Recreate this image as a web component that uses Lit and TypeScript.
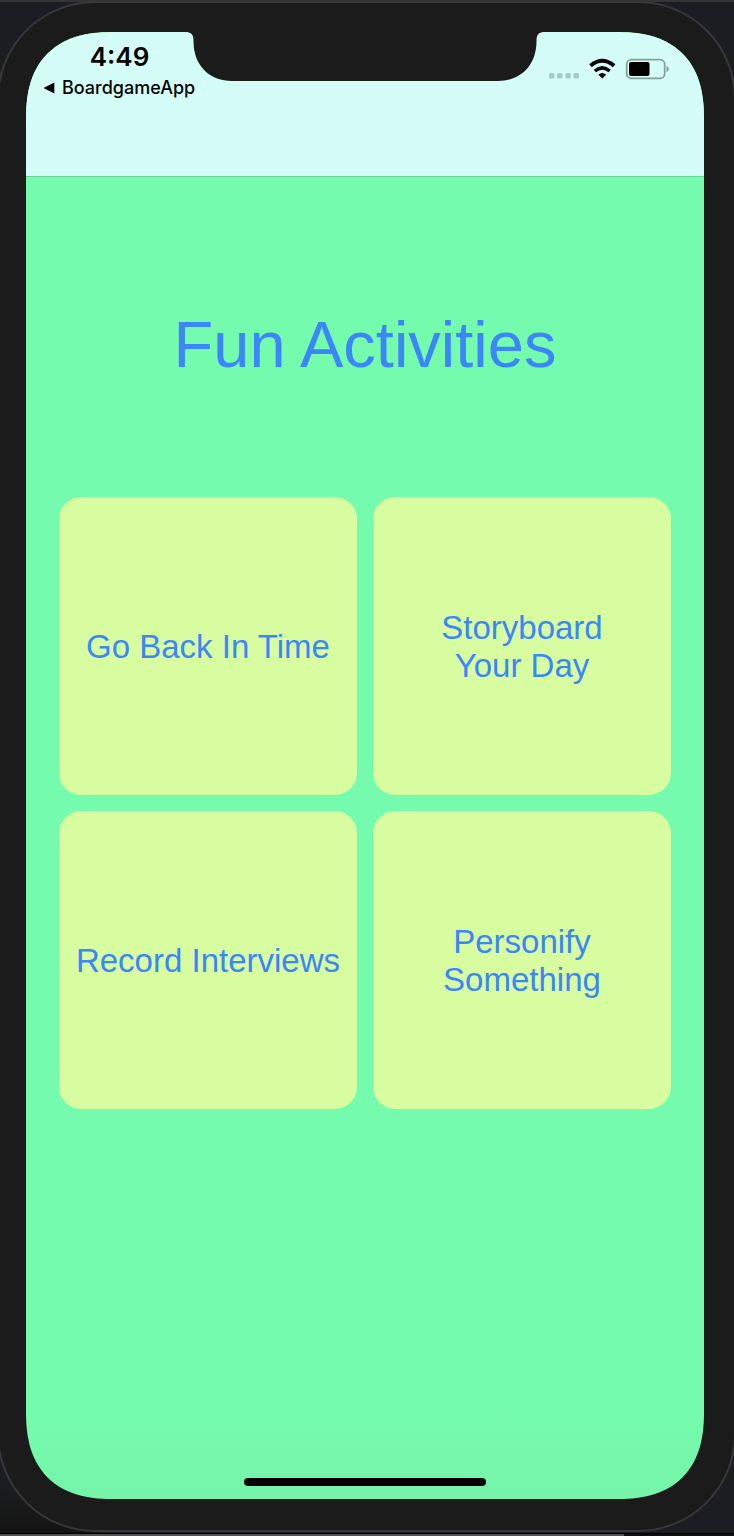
import { LitElement, html, css, svg } from "lit";
import { customElement, property } from "lit/decorators.js";

@customElement("status-bar")
class StatusBar extends LitElement {
  @property() time = "";
  @property() backTo = "";

  static styles = css`
    :host {
      display: grid;
      grid-template-columns: minmax(0, 1fr) 360px minmax(0, 1fr);
      height: 145px;
      box-sizing: border-box;
      background: #d5fdf7;
      border-bottom: 1px solid #66d39a;
      color: #000;
      font-family: Inter, "Liberation Sans", sans-serif;
    }
    .left {
      display: flex;
      flex-direction: column;
      padding: 9px 0 0 17px;
      white-space: nowrap;
    }
    .time {
      width: 153px;
      font-size: 26px;
      line-height: 32px;
      font-weight: 600;
      text-align: center;
    }
    .back {
      display: flex;
      align-items: center;
      gap: 7px;
      padding-top: 3px;
      font-size: 18px;
      line-height: 24px;
      font-weight: 500;
      color: inherit;
      text-decoration: none;
    }
    .notch {
      display: block;
    }
    .right {
      display: flex;
      justify-content: flex-end;
      align-items: flex-start;
      padding: 26px 34px 0 0;
    }
    svg {
      flex: none;
    }
  `;

  render() {
    return html`
      <div class="left">
        <div class="time">${this.time}</div>
        <a class="back" href="#">
          <svg width="12" height="12" viewBox="0 0 12 12" aria-hidden="true">
            <path d="M11.3 0.4V11.6L0.5 6z" />
          </svg>
          <span>${this.backTo}</span>
        </a>
      </div>
      <svg class="notch" width="360" height="50" viewBox="0 0 360 50" aria-hidden="true">
        <path
          fill="#1b1b1b"
          d="M0 -1H360V0C354 0 351.5 2 351.5 9C351.5 35 334 49 313 49H47C26 49 8.500 35 8.500 9C8.500 2 6 0 0 0z"
        />
      </svg>
      <div class="right">
        <svg width="122" height="22" viewBox="0 0 122 22" role="img" aria-label="Wi-Fi connected, battery 55%">
          <g fill="#a9cbc6">
            ${[1, 9, 17.3, 25.5].map((x) => svg`<rect x=${x} y="15" width="5.500" height="5.500" rx="1.500" />`)}
          </g>
          <path d="M54.300 20.600L50.400 16.800Q54.300 13.200 58.200 16.800z" />
          <g fill="none" stroke="#000">
            <path stroke-width="3.600" d="M46.900 13Q54.300 6.600 61.700 13" />
            <path stroke-width="3.900" d="M42.500 7.800Q54.300 -2.200 66.100 7.800" />
          </g>
          <rect x="78.700" y="1.700" width="38" height="18.600" rx="4.500" fill="none" stroke="#84a09c" stroke-width="1.800" />
          <rect x="81" y="4" width="20.500" height="14" rx="2" />
          <path fill="#84a09c" d="M118.500 8Q120.800 8.700 120.800 11T118.500 14z" />
        </svg>
      </div>
    `;
  }
}

@customElement("activity-grid")
class ActivityGrid extends LitElement {
  @property({ attribute: false }) activities: string[] = [];

  static styles = css`
    :host {
      display: grid;
      grid-template-columns: repeat(2, minmax(0, 1fr));
      gap: 16px;
    }
    .tile {
      aspect-ratio: 1;
      margin: 0;
      padding: 2px 0 0;
      border: 0;
      border-radius: 22px;
      background: #d8fca0;
      color: #3b86f8;
      font-family: "Liberation Sans", Arial, sans-serif;
      font-size: 33px;
      line-height: 38px;
      white-space: pre-line;
      cursor: pointer;
    }
  `;

  render() {
    return this.activities.map((name) => html`<button class="tile" type="button">${name}</button>`);
  }
}

@customElement("app-root")
class AppRoot extends LitElement {
  static styles = css`
    :host {
      display: flex;
      flex-direction: column;
      min-height: 100vh;
      box-sizing: border-box;
      overflow: hidden;
      padding: 1px 0 4px;
      background:
        linear-gradient(#343434, #343434) top / 100% 2px no-repeat,
        linear-gradient(90deg, #565454 85%, #101010 85%) bottom / 100% 2px no-repeat,
        linear-gradient(#000, #000) 0 calc(100% - 2px) / 100% 1px no-repeat,
        linear-gradient(#1c1d1e, #131313) bottom left / 100px 50px no-repeat,
        #1c1d22;
    }
    .device {
      flex: 1;
      display: flex;
      flex-direction: column;
      box-sizing: border-box;
      margin: 0 -2px 0 -3px;
      padding: 29px 30px 31px 27px;
      border: 2px solid #383838;
      border-radius: 98px;
      background: #1b1b1b;
    }
    .screen {
      flex: 1;
      display: flex;
      flex-direction: column;
      overflow: hidden;
      border-radius: 80px;
      background: linear-gradient(#75fbad calc(100% - 80px), #75f4aa);
    }
    @supports (corner-shape: superellipse(1.3)) {
      .screen {
        border-radius: 88px;
        corner-shape: superellipse(1.3);
      }
    }
    main {
      flex: 1;
      padding: 130px 33px 0;
    }
    h1 {
      margin: 0 0 114px;
      font-family: "Liberation Sans", Arial, sans-serif;
      font-size: 65px;
      line-height: 76px;
      font-weight: 400;
      text-align: center;
      color: #3b86f8;
    }
    .home {
      align-self: center;
      width: 242px;
      height: 8px;
      margin-bottom: 13px;
      border-radius: 4px;
      background: #000;
    }
  `;

  render() {
    return html`
      <div class="device">
        <div class="screen">
          <status-bar time="4:49" backTo="BoardgameApp"></status-bar>
          <main>
            <h1>Fun Activities</h1>
            <activity-grid
              .activities=${["Go Back In Time", "Storyboard\nYour Day", "Record Interviews", "Personify\nSomething"]}
            ></activity-grid>
          </main>
          <div class="home"></div>
        </div>
      </div>
    `;
  }
}
